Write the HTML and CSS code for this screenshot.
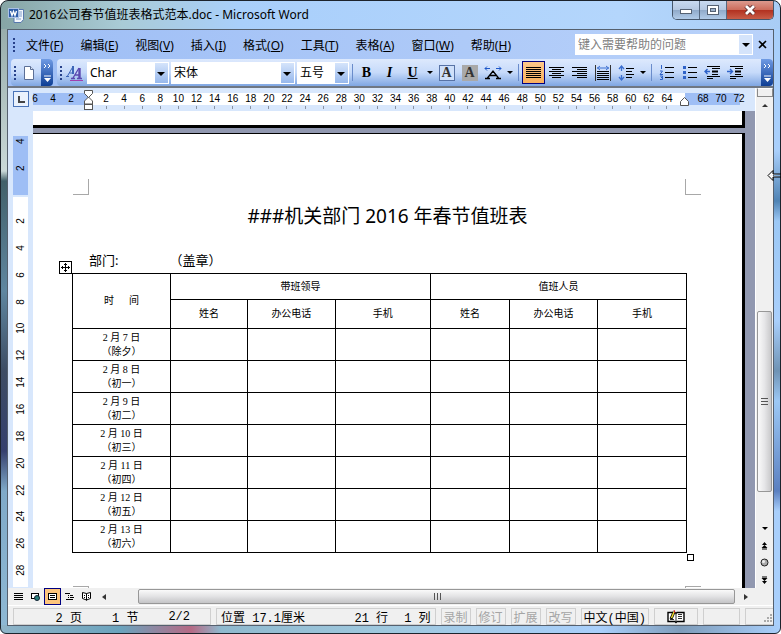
FILE: index.html
```html
<!DOCTYPE html>
<html lang="zh-CN">
<head>
    <meta charset="UTF-8">
    <meta name="viewport" content="width=device-width, initial-scale=1.0">
    <title>2016公司春节值班表格式范本.doc - Microsoft Word</title>
    <link rel="stylesheet" href="styles.css">
</head>
<body>
<div class="window">
    <header class="titlebar">
        <svg class="app-icon" width="16" height="16" viewBox="0 0 16 16">
            <path d="M6 2.500h9.500v10L13 15.500H6z" fill="#f4f8fe" stroke="#5778ae"/>
            <path d="M11 5h3M11 7h3M11 9h3M8 12h5" stroke="#7f9ccb"/>
            <rect x="0.500" y="1.500" width="10" height="9" fill="#2f5da8" stroke="#a9c0e6"/>
            <path d="M2.500 4l1.500 4.500L5.500 4.500 7 8.500 8.500 4" fill="none" stroke="#fff" stroke-width="1.400"/>
        </svg>
        <h1>2016公司春节值班表格式范本.doc - Microsoft Word</h1>
        <div class="window-buttons">
            <button class="win-btn" type="button" aria-label="最小化">
                <svg width="14" height="10"><rect x="1.500" y="4.500" width="11" height="4" fill="#fff" stroke="#566273"/></svg>
            </button>
            <button class="win-btn" type="button" aria-label="还原">
                <svg width="14" height="10"><rect x="1.500" y="0.500" width="11" height="9" fill="#fff" stroke="#566273"/><rect x="4.500" y="3.500" width="5" height="3" fill="#9fb2cb" stroke="#566273"/></svg>
            </button>
            <button class="win-btn win-close" type="button" aria-label="关闭">
                <svg width="14" height="10"><path d="M3 1l8 8M11 1L3 9" stroke="#5b2a2a" stroke-width="4.500"/><path d="M3 1l8 8M11 1L3 9" stroke="#fff" stroke-width="2.800"/></svg>
            </button>
        </div>
    </header>

    <div class="client">
        <nav class="menubar">
            <span class="grip"></span>
            <div class="menus">
                <button type="button">文件(<u>F</u>)</button>
                <button type="button">编辑(<u>E</u>)</button>
                <button type="button">视图(<u>V</u>)</button>
                <button type="button">插入(<u>I</u>)</button>
                <button type="button">格式(<u>O</u>)</button>
                <button type="button">工具(<u>T</u>)</button>
                <button type="button">表格(<u>A</u>)</button>
                <button type="button">窗口(<u>W</u>)</button>
                <button type="button">帮助(<u>H</u>)</button>
            </div>
            <div class="help-box">
                <input type="text" aria-label="帮助" placeholder="键入需要帮助的问题">
                <button type="button" aria-label="展开"><span class="arrow big"></span></button>
            </div>
            <button class="doc-close" type="button" aria-label="关闭窗口">
                <svg width="9" height="9"><path d="M1 1l7 7M8 1L1 8" stroke="#000" stroke-width="1.600"/></svg>
            </button>
        </nav>

        <div class="toolbars">
            <div class="toolbar">
                <span class="grip"></span>
                <button class="tool" type="button" aria-label="新建">
                    <svg width="12" height="16"><path d="M1.500 1.500h6l3 3v10h-9z" fill="#fff" stroke="#5c6f96"/><path d="M7.500 1.500v3h3" fill="#dce6f5" stroke="#5c6f96"/></svg>
                </button>
                <button class="more" type="button" aria-label="工具栏选项">
                    <svg width="9" height="19"><path d="M1 1l2 2-2 2M5 1l2 2-2 2M1 13h7" fill="none" stroke="#fff"/><path d="M1 15h7l-3.500 4z" fill="#fff"/></svg>
                </button>
            </div>
            <div class="toolbar format">
                <span class="grip"></span>
                <button class="tool" type="button" aria-label="格式窗格">
                    <svg width="17" height="17"><path d="M0 12.500h3M1.500 12L7 2.500M3.500 9h4" fill="none" stroke="#3d66b8"/><path d="M7 2v8" stroke="#3d66b8" stroke-width="2"/><path d="M5 14.500h4M7 14L13 4M9 11h4M11 14.500h5" fill="none" stroke="#5b48b0" stroke-width="1.300"/><path d="M13.500 4v10" stroke="#5b48b0" stroke-width="2.400"/><path d="M4 16.500h13" stroke="#a040b0"/></svg>
                </button>
                <div class="combo style-combo"><select aria-label="样式"><option>Char</option></select></div>
                <div class="combo font-combo"><select aria-label="字体"><option>宋体</option></select></div>
                <div class="combo size-combo"><select aria-label="字号"><option>五号</option></select></div>
                <span class="sep"></span>
                <button class="tool letter" type="button"><b>B</b></button>
                <button class="tool letter" type="button"><i>I</i></button>
                <button class="tool letter" type="button"><u>U</u></button>
                <button class="drop" type="button" aria-label="下划线类型"><span class="arrow"></span></button>
                <button class="tool letter" type="button"><span class="boxed">A</span></button>
                <button class="tool letter" type="button"><span class="shaded">A</span></button>
                <button class="tool" type="button" aria-label="字符缩放">
                    <svg width="18" height="16"><path d="M3.500 13L9 6l5.500 7M6 10.500h6M1 13.500h5M12 13.500h5" fill="none" stroke="#000" stroke-width="1.300"/><path d="M1 3.500h5M12 3.500h5M3 1.500l-2 2 2 2M15 1.500l2 2-2 2" fill="none" stroke="#1c56c8"/></svg>
                </button>
                <button class="drop" type="button" aria-label="缩放比例"><span class="arrow"></span></button>
                <span class="sep"></span>
                <button class="tool active" type="button" aria-label="两端对齐">
                    <svg width="15" height="13"><path d="M0 1.500h15M0 3.500h15M0 5.500h15M0 7.500h15M0 9.500h15M0 11.500h15" stroke="#000"/></svg>
                </button>
                <button class="tool" type="button" aria-label="居中">
                    <svg width="15" height="13"><path d="M0 1.500h15M3 3.500h9M0 5.500h15M3 7.500h9M0 9.500h15M3 11.500h9" stroke="#000"/></svg>
                </button>
                <button class="tool" type="button" aria-label="右对齐">
                    <svg width="15" height="13"><path d="M0 1.500h15M5 3.500h10M0 5.500h15M5 7.500h10M0 9.500h15M5 11.500h10" stroke="#000"/></svg>
                </button>
                <button class="tool" type="button" aria-label="分散对齐">
                    <svg width="16" height="16"><path d="M0.500 0v16M15.500 0v16" stroke="#333"/><path d="M2 3h12M5 1L2.500 3 5 5M11 1l2.500 2L11 5" fill="none" stroke="#3b6fd0"/><path d="M2 6.500h12M2 8.500h12M2 10.500h12M2 12.500h12M2 14.500h12" stroke="#000"/></svg>
                </button>
                <button class="tool" type="button" aria-label="行距">
                    <svg width="16" height="16"><path d="M3.500 1v5M3.500 10v5M1 4l2.500-3L6 4M1 12l2.500 3L6 12" fill="none" stroke="#3b6fd0" stroke-width="1.300"/><path d="M8 3.500h8M8 6.500h6M8 9.500h8M8 12.500h6" stroke="#000"/></svg>
                </button>
                <button class="drop" type="button" aria-label="行距值"><span class="arrow"></span></button>
                <span class="sep"></span>
                <button class="tool" type="button" aria-label="编号">
                    <svg width="15" height="15"><path d="M2.500 0v4M1 6h2.500L1 9.500h3M1 11h2.500v1.500H2h1.500V14.500H1" fill="none" stroke="#2e62c8"/><path d="M6 2.500h9M6 7.500h9M6 12.500h9" stroke="#000"/></svg>
                </button>
                <button class="tool" type="button" aria-label="项目符号">
                    <svg width="15" height="15"><path d="M1 2.500h3M1 7.500h3M1 12.500h3" stroke="#2e62c8" stroke-width="3"/><path d="M6 2.500h9M6 7.500h9M6 12.500h9" stroke="#000"/></svg>
                </button>
                <button class="tool" type="button" aria-label="减少缩进量">
                    <svg width="17" height="15"><path d="M3 1.500h13M8 3.500h8M8 9.500h6M3 11.500h13M3 13.500h6" stroke="#000"/><path d="M8 6.500h6" stroke="#000" stroke-width="2"/><path d="M6 6.500H1M3.500 4L1 6.500 3.500 9" fill="none" stroke="#2e62c8" stroke-width="1.400"/></svg>
                </button>
                <button class="tool" type="button" aria-label="增加缩进量">
                    <svg width="17" height="15"><path d="M3 1.500h13M8 3.500h8M8 9.500h6M3 11.500h13M3 13.500h6" stroke="#000"/><path d="M8 6.500h6" stroke="#000" stroke-width="2"/><path d="M0 6.500h5M3 4l2.500 2.500L3 9" fill="none" stroke="#2e62c8" stroke-width="1.400"/></svg>
                </button>
                <button class="more" type="button" aria-label="工具栏选项">
                    <svg width="9" height="19"><path d="M1 1l2 2-2 2M5 1l2 2-2 2M1 13h7" fill="none" stroke="#fff"/><path d="M1 15h7l-3.500 4z" fill="#fff"/></svg>
                </button>
            </div>
        </div>

        <div class="workspace">
            <div class="vruler-col">
                <button class="tab-stop" type="button" aria-label="左对齐制表符">
                    <svg width="7" height="7"><path d="M1 0v6h6" fill="none" stroke="#444" stroke-width="2"/></svg>
                </button>
                <div class="vruler-margin"><span>4</span><span>2</span></div>
                <div class="vruler">
                    <span>2</span><span>4</span><span>6</span><span>8</span><span>10</span><span>12</span><span>14</span><span>16</span><span>18</span><span>20</span><span>22</span><span>24</span><span>26</span><span>28</span>
                </div>
            </div>

            <div class="doc-col">
                <div class="hruler">
                    <div class="hruler-margin left"><span>6</span><span>4</span><span>2</span></div>
                    <div class="hruler-body">
                        <span>2</span><span>4</span><span>6</span><span>8</span><span>10</span><span>12</span><span>14</span><span>16</span><span>18</span><span>20</span><span>22</span><span>24</span><span>26</span><span>28</span><span>30</span><span>32</span><span>34</span><span>36</span><span>38</span><span>40</span><span>42</span><span>44</span><span>46</span><span>48</span><span>50</span><span>52</span><span>54</span><span>56</span><span>58</span><span>60</span><span>62</span><span>64</span>
                        <svg class="indent-left" width="9" height="21"><path d="M0.500 0.500h8v3l-4 4-4-4zM0.500 14v-3l4-4 4 4v3z" fill="#fff" stroke="#555"/><rect x="0.500" y="14.500" width="8" height="5" fill="#fff" stroke="#555"/></svg>
                        <svg class="indent-right" width="9" height="9"><path d="M0.500 8.500v-4l4-4 4 4v4z" fill="#fff" stroke="#555"/></svg>
                    </div>
                    <div class="hruler-margin right"><span>68</span><span>70</span><span>72</span></div>
                </div>

                <div class="pages">
                    <div class="page-end"></div>
                    <main class="page">
                        <div class="crop-marks top"><i></i><i></i></div>
                        <h2>###机关部门 2016 年春节值班表</h2>
                        <p class="dept"><span>部门:</span><span>（盖章）</span></p>
                        <div class="table-wrap">
                            <svg class="move-handle" width="13" height="13"><rect x="0.500" y="0.500" width="12" height="12" fill="#fff" stroke="#000"/><path d="M6.500 2v9M2 6.500h9M5 3.500h3M5 9.500h3M3.500 5v3M9.500 5v3" stroke="#000"/></svg>
                            <table>
                                <colgroup>
                                    <col class="c-date"><col class="c-name"><col class="c-tel"><col class="c-cell"><col class="c-staff"><col class="c-tel"><col>
                                </colgroup>
                                <thead>
                                    <tr class="group"><th rowspan="2"><span class="time"><span>时</span><span>间</span></span></th><th colspan="3">带班领导</th><th colspan="3">值班人员</th></tr>
                                    <tr class="sub"><th>姓名</th><th>办公电话</th><th>手机</th><th>姓名</th><th>办公电话</th><th>手机</th></tr>
                                </thead>
                                <tbody>
                                    <tr><td>2 月 7 日<br>（除夕）</td><td></td><td></td><td></td><td></td><td></td><td></td></tr>
                                    <tr><td>2 月 8 日<br>（初一）</td><td></td><td></td><td></td><td></td><td></td><td></td></tr>
                                    <tr><td>2 月 9 日<br>（初二）</td><td></td><td></td><td></td><td></td><td></td><td></td></tr>
                                    <tr><td>2 月 10 日<br>（初三）</td><td></td><td></td><td></td><td></td><td></td><td></td></tr>
                                    <tr><td>2 月 11 日<br>（初四）</td><td></td><td></td><td></td><td></td><td></td><td></td></tr>
                                    <tr><td>2 月 12 日<br>（初五）</td><td></td><td></td><td></td><td></td><td></td><td></td></tr>
                                    <tr><td>2 月 13 日<br>（初六）</td><td></td><td></td><td></td><td></td><td></td><td></td></tr>
                                </tbody>
                            </table>
                            <span class="size-handle"></span>
                        </div>
                        <div class="crop-marks bottom"><i></i><i></i></div>
                    </main>
                </div>
            </div>

            <div class="vscroll">
                <span class="split"></span>
                <button type="button" aria-label="向上"><span class="arrow up"></span></button>
                <div class="vtrack"><span class="vthumb"><svg width="8" height="8"><path d="M0 1.500h7M0 4.500h7M0 7.500h7" stroke="#555"/></svg></span></div>
                <button type="button" aria-label="向下"><span class="arrow"></span></button>
                <button type="button" aria-label="前一页"><svg width="7" height="8"><path d="M3.500 0L6 3H1zM3.500 3L6.500 6H0.500zM1 6.500h5v1H1z"/></svg></button>
                <button type="button" aria-label="选择浏览对象"><svg width="9" height="9"><circle cx="4.500" cy="4.500" r="3.500" fill="#aaa" stroke="#222"/><circle cx="3.500" cy="3.500" r="1.500" fill="#eee"/></svg></button>
                <button type="button" aria-label="下一页"><svg width="7" height="8"><path d="M1 0.500h5v1H1zM0.500 2h6l-3 3zM1 5h5L3.500 8z"/></svg></button>
            </div>
        </div>

        <div class="bottom-bar">
            <button type="button" aria-label="普通视图"><svg width="9" height="9"><path d="M0 1.500h9M0 3.500h9M0 5.500h9M0 7.500h9" stroke="#000"/></svg></button>
            <button type="button" aria-label="Web 版式视图"><svg width="9" height="9"><rect x="0.500" y="1.500" width="7" height="5" fill="#fff" stroke="#000"/><circle cx="6" cy="6" r="2.500" fill="#2a7f7a" stroke="#123"/></svg></button>
            <button class="active" type="button" aria-label="页面视图"><svg width="9" height="9"><rect x="0.500" y="1.500" width="8" height="6" fill="#fff" stroke="#000"/><path d="M2 3.500h5M2 5.500h5" stroke="#000"/></svg></button>
            <button type="button" aria-label="大纲视图"><svg width="9" height="9"><path d="M0 1.500h5M3 3.500h1M5 3.500h3M3 5.500h1M5 5.500h4M1 7.500h7" stroke="#000"/></svg></button>
            <button type="button" aria-label="阅读版式"><svg width="9" height="9"><path d="M4.500 1.500v7M0.500 0.500l4 1 4-1v6l-4 1.500-4-1.500zM2 3.500h1M6 3.500h1M2 5.500h1M6 5.500h1" fill="#fff" stroke="#000"/></svg></button>
            <button type="button" aria-label="向左"><span class="arrow left"></span></button>
            <div class="htrack"><span class="hthumb"><svg width="8" height="8"><path d="M1.500 0v7M4.500 0v7M7.500 0v7" stroke="#555"/></svg></span></div>
            <button type="button" aria-label="向右"><span class="arrow right"></span></button>
        </div>

        <footer class="statusbar">
            <div class="status-cell st-page"><span>2 页</span><span>1 节</span><span>2/2</span></div>
            <div class="status-cell st-pos"><span>位置 17.1厘米</span><span>21 行</span><span>1 列</span></div>
            <div class="status-cell off">录制</div>
            <div class="status-cell off">修订</div>
            <div class="status-cell off">扩展</div>
            <div class="status-cell off">改写</div>
            <div class="status-cell">中文(中国)</div>
            <div class="status-cell st-book"><svg width="18" height="14"><path d="M1 2.500h7l1 1 1-1h7v9h-7l-1 1-1-1H1z" fill="#fff" stroke="#000" stroke-width="1.400"/><path d="M9 3v9M11 4.500h4M11 6.500h4M11 8.500h4M3 9.500h4" stroke="#333"/><path d="M4 9l3-7" stroke="#000" stroke-width="3"/><path d="M4.500 8L7 2" stroke="#f1dc2c" stroke-width="1.500"/><path d="M7 0l1 3" stroke="#c22"/></svg></div>
            <div class="status-cell st-empty"></div>
            <div class="status-cell st-end"><svg width="10" height="10"><path d="M7 1h2M4 4h2M7 4h2M1 7h2M4 7h2M7 7h2" stroke="#aaa" stroke-width="2"/></svg></div>
        </footer>
    </div>

    <svg class="pointer" width="14" height="11"><path d="M1 5.500L6 0.500v3.500h8M14 7H6v3.500L1 5.500" fill="#fff" stroke="#000"/></svg>
</div>
</body>
</html>
```

FILE: styles.css
```css
* {
    box-sizing: border-box;
}

body {
    margin: 0;
    background-color: #fff;
    font-family: "Noto Sans", "Noto Sans CJK SC", sans-serif;
    font-size: 12px;
    color: #000;
}

button, input, select {
    font: inherit;
    color: inherit;
    border: none;
    background: none;
    padding: 0;
    margin: 0;
}

button {
    display: flex;
    align-items: center;
    justify-content: center;
}

svg {
    display: block;
    flex: none;
}

/* window frame */
.window {
    position: relative;
    display: flex;
    flex-direction: column;
    min-height: 100vh;
    padding: 0 6px 7px;
    border: 1px solid #1c232c;
    border-radius: 8px 8px 6px 6px;
    background: linear-gradient(to right, #86a5a5 0, #a9cbd6 120px, #a9cffb 240px, #b4d6fc 620px, #a9cdf5 100%) top / 100% 28px no-repeat,
        linear-gradient(to right, #8fb4c8, #6ba3bd 120px, #b56a85 190px, #8fb9ce 220px, #9fc8de 380px, #a9cffb 600px, #7e9cba 680px, #a9cffb) bottom / 100% 8px no-repeat,
        linear-gradient(#8ea5a3 0, #c9d8d8 170px, #41606a 180px, #5f86a0 290px, #3c4c64 370px, #35406e 450px, #7fa9c9 490px, #8fb9d4) left / 8px 100% no-repeat,
        linear-gradient(#a9cffb 0, #a9cffb 150px, #4f83b4 200px, #9cc8f5 220px, #a9cffb 320px, #6f93b4 370px, #9cc8f5 400px, #5b80c0 490px, #a9cffb 510px) right / 8px 100% no-repeat;
}

.titlebar {
    display: flex;
    align-items: center;
    height: 28px;
    padding-left: 1px;
}

.titlebar h1 {
    flex: 1;
    margin: 0 0 0 5px;
    font-size: 12px;
    font-weight: normal;
    line-height: 16px;
}

.window-buttons {
    display: flex;
    align-self: flex-start;
    height: 19px;
    border: 1px solid #46566a;
    border-top: none;
    border-radius: 0 0 5px 5px;
    overflow: hidden;
}

.win-btn {
    width: 27px;
    background: linear-gradient(#c9daf0, #b4c7e0 50%, #8fa9c9 50%, #b1cbe8);
    border-right: 1px solid #56687f;
}

.win-close {
    width: 46px;
    border-right: none;
    background: linear-gradient(#dc9a8e, #cc6b5a 50%, #b1301f 50%, #c85d48);
}

.client {
    flex: 1;
    display: flex;
    flex-direction: column;
    border: 1px solid #55606e;
    background-color: #f0f0f0;
}

/* menu */
.menubar {
    display: flex;
    align-items: center;
    height: 29px;
    padding: 0 6px 0 5px;
    background: linear-gradient(to right, #9ebef5, #b9d2fa);
}

.grip {
    width: 2px;
    height: 14px;
    flex: none;
    background: repeating-linear-gradient(#27418a 0, #27418a 2px, transparent 2px, transparent 4px);
}

.menus {
    flex: 1;
    display: flex;
    gap: 17px;
    margin-left: 11px;
}

.menus button {
    display: block;
    white-space: nowrap;
}

.help-box {
    display: flex;
    width: 178px;
    height: 21px;
    background-color: #fff;
    border: 1px solid #fff;
}

.help-box input {
    flex: 1;
    min-width: 0;
    padding-left: 2px;
}

.help-box input::placeholder {
    color: #808080;
    opacity: 1;
}

.help-box button {
    width: 13px;
    background-color: #d5e4fb;
}

.doc-close {
    margin-left: 5px;
}

.arrow {
    width: 0;
    height: 0;
    border: 3px solid transparent;
    border-top-color: #000;
    border-bottom: none;
}

.arrow.big {
    border-width: 4px;
    border-bottom: none;
}

.arrow.up {
    border-top: none;
    border-bottom: 3px solid #333;
}

.arrow.left {
    border: 3px solid transparent;
    border-right: 4px solid #333;
    border-left: none;
}

.arrow.right {
    border: 3px solid transparent;
    border-left: 4px solid #333;
    border-right: none;
}

/* toolbars */
.toolbars {
    display: flex;
    gap: 4px;
    padding-left: 3px;
    background: linear-gradient(to right, #9ebef5, #b9d2fa);
    border-bottom: 2px solid #6f7783;
}

.toolbar {
    display: flex;
    align-items: center;
    height: 27px;
    padding-left: 3px;
    border-radius: 4px;
    background: linear-gradient(#dde9fd, #c6dafa 50%, #7fa6e2);
    overflow: hidden;
}

.toolbar.format {
    flex: 1;
}

.tool {
    width: 23px;
    height: 23px;
    flex: none;
}

/* wider first button in each bar, next to the grip */
.grip + .tool {
    width: 25px;
}

.tool.active {
    background: linear-gradient(#fcc88a, #fbb05c);
    border: 1px solid #000080;
}

.letter {
    font-family: "Liberation Serif", serif;
    font-size: 14px;
    font-weight: bold;
}

.boxed, .shaded {
    width: 16px;
    line-height: 14px;
    border: 1px solid #5873a6;
    background-color: #cfe0fa;
    text-align: center;
    color: #333;
}

.shaded {
    border-color: #a9a9a9;
    background-color: #a9a9a9;
}

.drop {
    width: 11px;
    height: 23px;
}

.sep {
    width: 1px;
    height: 17px;
    flex: none;
    margin: 0 3px;
    background-color: #6a8ccb;
}

.size-combo + .sep {
    margin: 0 2px 0 1px;
}

.more {
    width: 12px;
    height: 27px;
    margin-left: auto;
    background: linear-gradient(#6f9be4, #0d3d94);
}

.combo {
    position: relative;
    height: 22px;
    margin-right: 2px;
    background-color: #fff;
}

.combo select {
    appearance: none;
    width: 100%;
    height: 22px;
    padding-left: 3px;
}

/* drop-down button drawn over the right end of the select */
.combo::after {
    content: "";
    position: absolute;
    top: 1px;
    right: 1px;
    width: 13px;
    height: 20px;
    background: linear-gradient(#d5e4fb, #97b8ec);
    pointer-events: none;
}

.combo::before {
    content: "";
    position: absolute;
    z-index: 1;
    top: 10px;
    right: 4px;
    border: 4px solid transparent;
    border-top-color: #000;
    border-bottom: none;
    pointer-events: none;
}

.style-combo {
    width: 82px;
}

.font-combo {
    width: 124px;
}

.size-combo {
    width: 52px;
}

/* rulers */
.workspace {
    flex: 1;
    display: flex;
    background-color: #9198b0;
}

.hruler, .vruler, .hruler-margin, .vruler-margin {
    font-family: "Liberation Sans", sans-serif;
    font-size: 10px;
}

.vruler-col {
    display: flex;
    flex-direction: column;
    width: 25px;
    padding: 3px 5px 1px;
    background-color: #d8e7fc;
}

.tab-stop {
    width: 16px;
    height: 16px;
    border: 1px solid #4a74b8;
    background-color: #eaf2fd;
}

.vruler-margin, .vruler {
    display: flex;
    flex-direction: column;
    background-color: #9ebef5;
}

.vruler-margin {
    height: 59px;
    margin-top: 29px;
    padding-bottom: 13px;
    justify-content: flex-end;
    overflow: hidden;
}

.vruler {
    flex: 1;
    margin-top: 2px;
    padding: 11px 0 3px;
    background-color: #fff;
}

.vruler span, .vruler-margin span {
    display: flex;
    align-items: center;
    justify-content: center;
    writing-mode: vertical-rl;
    transform: rotate(180deg);
    width: 14px;
}

.vruler span {
    flex: 1;
}

.vruler-margin span {
    flex: none;
    height: 27px;
}

.doc-col {
    flex: 1;
    min-width: 0;
    display: flex;
    flex-direction: column;
}

.hruler {
    display: flex;
    height: 23px;
    padding: 5px 15px 6px 0;
    background-color: #d8e7fc;
}

.hruler-margin {
    display: flex;
    flex: none;
    width: 55px;
    line-height: 12px;
    background-color: #9ebef5;
}

.hruler-margin span {
    width: 18px;
    text-align: center;
    flex: none;
}

.hruler-margin.left {
    justify-content: flex-end;
    padding-right: 8px;
}

.hruler-margin.right {
    padding-left: 9px;
}

.hruler-body {
    position: relative;
    flex: 1;
    display: flex;
    padding: 0 9px;
    line-height: 12px;
    background-color: #fff;
}

.hruler-body span {
    flex: 1 1 0;
    min-width: 0;
    display: flex;
    flex-direction: column;
    align-items: center;
}

.hruler-body span::after {
    content: "";
    width: 1px;
    height: 3px;
    flex: none;
    margin-top: 1px;
    background-color: #8a93a3;
}

.indent-left {
    position: absolute;
    left: -4px;
    top: -3px;
}

.indent-right {
    position: absolute;
    right: -4px;
    top: 4px;
}

/* document */
.pages {
    flex: 1;
    display: flex;
    flex-direction: column;
    padding-right: 10px;
}

.page-end {
    height: 17px;
    margin-bottom: 5px;
    background-color: #fff;
    border-right: 3px solid #000;
    border-bottom: 3px solid #000;
}

.page {
    flex: 1;
    display: flex;
    flex-direction: column;
    background-color: #fff;
    border-top: 1px solid #000;
    border-right: 3px solid #000;
}

.crop-marks {
    display: flex;
    justify-content: space-between;
    padding: 0 41px 0 40px;
}

.crop-marks i {
    width: 16px;
    height: 16px;
    border: 0 solid #a8a8a8;
    border-bottom-width: 1px;
}

.crop-marks i:first-child {
    border-right-width: 1px;
}

.crop-marks i:last-child {
    border-left-width: 1px;
}

.crop-marks.top {
    margin-top: 45px;
}

.crop-marks.bottom {
    margin-top: auto;
}

.crop-marks.bottom i {
    height: 2px;
    border-bottom-width: 0;
    border-top-width: 1px;
}

.page h2 {
    margin: 7px 0 0;
    font-size: 19px;
    font-weight: normal;
    line-height: 28px;
    text-align: center;
}

.dept {
    display: flex;
    gap: 51px;
    margin: 22px 0 5px 56px;
    font-size: 13px;
    line-height: 16px;
}

.table-wrap {
    position: relative;
    margin: 0 55px 0 39px;
}

table {
    width: 100%;
    border-collapse: collapse;
    table-layout: fixed;
    font-family: "Liberation Serif", "Noto Sans CJK SC", serif;
    font-size: 10px;
    line-height: 14px;
}

th, td {
    border: 1px solid #000;
    padding: 0;
    height: 32px;
    text-align: center;
    font-weight: normal;
}

.group th {
    height: 26px;
}

.sub th {
    height: 29px;
}

.c-date {
    width: 16%;
}

.c-name {
    width: 12.5%;
}

.c-tel {
    width: 14.3%;
}

.c-cell {
    width: 15.5%;
}

.c-staff {
    width: 12.9%;
}

.time {
    display: flex;
    justify-content: center;
    gap: 15px;
}

.move-handle {
    position: absolute;
    left: -13px;
    top: -12px;
}

.size-handle {
    position: absolute;
    right: -7px;
    bottom: -8px;
    width: 7px;
    height: 7px;
    border: 1px solid #000;
    background-color: #fff;
}

/* scroll bars */
.vscroll {
    display: flex;
    flex-direction: column;
    align-items: center;
    width: 18px;
    background-color: #f0f0f0;
    border-left: 1px solid #fff;
}

.vscroll button {
    width: 16px;
    height: 17px;
    flex: none;
}

.split {
    width: 16px;
    height: 9px;
    flex: none;
    border: 1px solid #8a8a8a;
    border-top-color: #fff;
    background-color: #f0f0f0;
}

.vtrack {
    flex: 1;
    display: flex;
    flex-direction: column;
    padding-bottom: 28px;
}

.vthumb {
    display: flex;
    align-items: center;
    justify-content: center;
    width: 15px;
    height: 48%;
    margin-top: auto;
    border: 1px solid #979797;
    border-radius: 2px;
    background: linear-gradient(to right, #fafafa, #e6e6e8 50%, #c9c9cb);
}

.bottom-bar {
    display: flex;
    align-items: center;
    height: 17px;
    padding: 0 19px 0 2px;
}

.bottom-bar button {
    width: 17px;
    height: 17px;
    flex: none;
}

.bottom-bar .active {
    background-color: #fdc57c;
    border: 1px solid #000080;
}

.htrack {
    flex: 1;
    padding: 0 2px 0 26px;
}

.hthumb {
    display: flex;
    align-items: center;
    justify-content: center;
    height: 15px;
    border: 1px solid #979797;
    border-radius: 2px;
    background: linear-gradient(#fafafa, #e2e2e4 50%, #c4c4c6);
}

/* status bar */
.statusbar {
    display: flex;
    gap: 5px;
    padding: 2px 0 0 5px;
    border-top: 1px solid #fff;
    font-family: "Liberation Mono", "Noto Sans CJK SC", monospace;
}

.status-cell {
    display: flex;
    align-items: center;
    justify-content: center;
    height: 17px;
    padding: 0 2px;
    border: 1px solid #cfcfcf;
    white-space: nowrap;
}

.st-page {
    width: 198px;
    gap: 30px;
    padding-right: 20px;
    justify-content: flex-end;
}

.st-pos {
    flex: 1;
    padding: 0 4px;
    gap: 16px;
}

.st-pos span:first-child {
    flex: 1;
}

.off {
    color: #a5a5a5;
}

.st-book {
    width: 44px;
}

.st-empty {
    width: 37px;
}

.st-end {
    width: 28px;
    padding: 0;
    border-right: none;
    justify-content: flex-end;
    align-items: flex-end;
}

.pointer {
    position: absolute;
    right: -1px;
    top: 169px;
}
```
